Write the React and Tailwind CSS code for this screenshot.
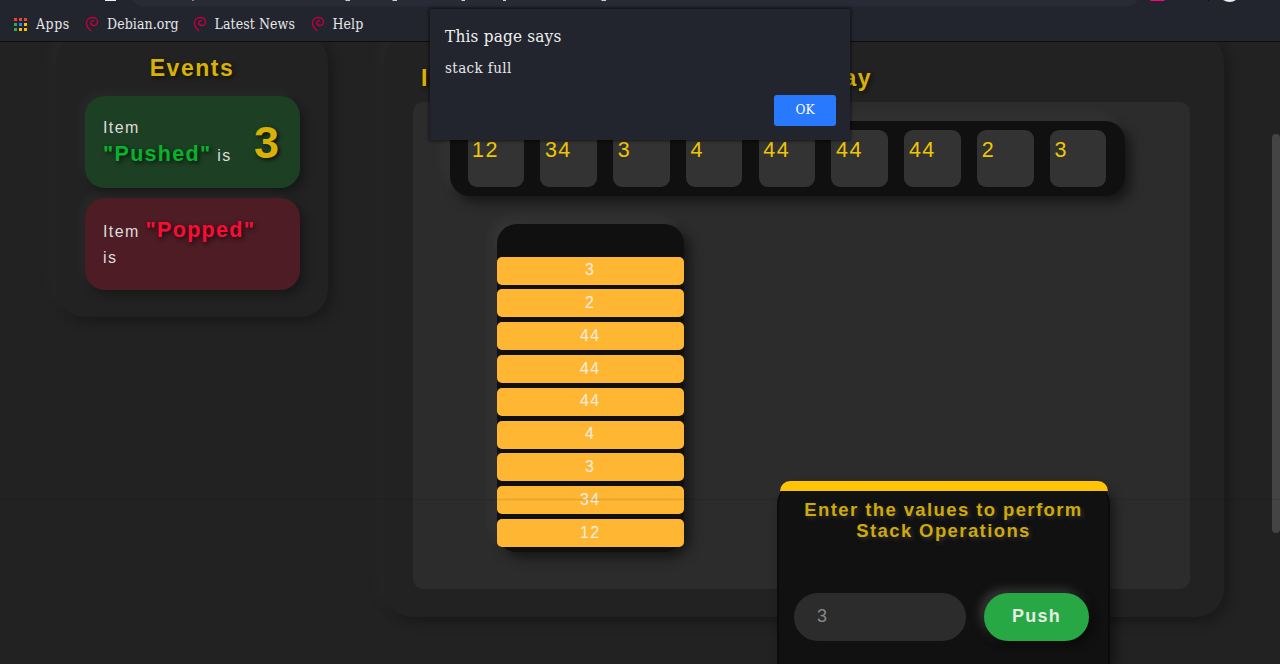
import React from "react";

const slab = "whitespace-nowrap font-['Roboto_Slab','DejaVu_Serif_Condensed','DejaVu_Serif',serif]";
const arrayItems = [12, 34, 3, 4, 44, 44, 44, 2, 3];
const stackItems = [3, 2, 44, 44, 44, 4, 3, 34, 12];

function AppsIcon() {
  const colors = ["#ea4335", "#ea4335", "#ea4335", "#34a853", "#2684fc", "#fbbc04", "#34a853", "#fbbc04", "#fbbc04"];
  return (
    <svg width="13" height="13" viewBox="0 0 13 13" className="shrink-0">
      {colors.map((c, i) => (
        <rect key={i} x={(i % 3) * 5} y={Math.floor(i / 3) * 5} width="3" height="3" fill={c} />
      ))}
    </svg>
  );
}

function Swirl() {
  return (
    <svg width="14" height="16" viewBox="0 0 14 16" fill="none" stroke="#c0003f" strokeLinecap="round" className="shrink-0">
      <path strokeWidth="1.400" d="M5.800 14.600C3.200 12.600 1.400 9.800 1.500 6.800C1.600 3.600 4.200 1.500 7.300 1.500C10.400 1.500 12.500 3.400 12.500 5.900C12.500 8.300 10.500 9.800 8.500 9.500C6.600 9.200 5.700 7.800 5.900 6.400C6.100 5.100 7.200 4.500 8.300 4.700" />
    </svg>
  );
}

function Bookmark({ label, className }) {
  return (
    <div className={"flex items-center " + className}>
      <Swirl />
      <span className={slab + " ml-[8px] text-[14px] leading-[20px] tracking-[0.080px] text-[#e8e8ea]"}>{label}</span>
    </div>
  );
}

function Browser() {
  return (
    <header className="h-[42px] shrink-0 border-b border-[#0c0d10] bg-[#22252e]">
      <svg width="1280" height="7" viewBox="0 0 1280 7" className="block">
        <path d="M132 0H1138Q1134 6.500 1126 6.500H144Q136 6.500 132 0Z" fill="#282a36" />
        <rect x="105" y="0" width="11" height="1" fill="#eee" />
        <path d="M192 0h2v1h-2z" fill="#888" />
        <path d="M345 0h5v1h-4zM392 0h5v1h-4zM461 0h4v1h-3zM503 0h3v1h-3zM601 0h5v1h-4z" fill="#cfd0d4" />
        <path d="M1150 0h15l-1 1h-13z" fill="#ff0080" />
        <path d="M1208 0h1v1h-1z" fill="#08090c" />
        <path d="M1223 0h13q-6 4-13 0z" fill="#eee" />
      </svg>
      <nav className="flex h-[34px] items-center pl-[14px]">
        <div className="flex w-[71px] items-center gap-[9px]">
          <AppsIcon />
          <span className={slab + " text-[14px] leading-[20px] tracking-[0.500px] text-[#e8e8ea]"}>Apps</span>
        </div>
        <Bookmark label="Debian.org" className="w-[107.500px]" />
        <Bookmark label="Latest News" className="w-[118px]" />
        <Bookmark label="Help" className="w-[60px]" />
      </nav>
    </header>
  );
}

function Dialog() {
  return (
    <div className="absolute left-[430px] top-[9px] z-20 flex h-[131px] w-[420px] flex-col bg-[#22252e] pl-[15px] pt-[15px] shadow-[0_0_3px_1px_rgba(0,0,0,0.55)]">
      <h1 className={slab + " text-[17px] leading-[24px] tracking-[0.200px] text-[#f0f0f1]"}>This page says</h1>
      <p className={slab + " mt-[9px] text-[15px] leading-[22px] tracking-[0.400px] text-[#e8e8ea]"}>stack full</p>
      <button className={slab + " ml-auto mr-[14px] mt-[15.500px] flex h-[31.500px] w-[62px] items-center justify-center rounded-[3px] bg-[#2979ff] pb-[2px] text-[13.500px] text-white"}>OK</button>
    </div>
  );
}

function Events() {
  const card = "flex h-[92px] items-center justify-between rounded-[20px] pl-[18.500px] pr-[19px] shadow-[5px_5px_10px_rgba(0,0,0,0.3),-5px_-5px_10px_rgba(255,255,255,0.03)]";
  return (
    <section className="h-[283px] w-[272px] rounded-[28px] bg-[#222] px-[28.500px] pt-[18px] shadow-[6px_6px_10px_#1b1b1b,-6px_-6px_10px_#272727]">
      <h2 className="mb-[12px] text-center text-[23px] font-bold leading-[33px] tracking-[1.500px] text-[#d9b105] [text-shadow:2px_2px_4px_#111]">Events</h2>
      <div className={card + " -mt-px bg-[#1d4024]"}>
        <p className="w-[140px] text-[16px] leading-[26.500px] tracking-[1.400px] text-[#ddd]">
          Item <b className="text-[21.500px] tracking-[1.300px] text-[#06b32c] [text-shadow:2px_2px_4px_#111]">"Pushed"</b> is
        </p>
        <b className="pr-[1.500px] text-[45px] leading-none text-[#d9b105] [text-shadow:2px_2px_4px_#111]">3</b>
      </div>
      <div className={card + " mt-[10px] bg-[#4d1c24]"}>
        <p className="w-[160px] text-[16px] leading-[26.500px] tracking-[1.400px] text-[#ddd]">
          Item <b className="text-[21.500px] tracking-[1.300px] text-[#ff0a35] [text-shadow:2px_2px_4px_#111]">"Popped"</b> is
        </p>
      </div>
    </section>
  );
}

function Visualizer() {
  return (
    <section className="h-[583px] w-[840px] rounded-[28px] bg-[#222] pl-[28.500px] pt-[27px] shadow-[6px_6px_10px_#1b1b1b,-6px_-6px_10px_#272727]">
      <h2 className="mb-[8px] whitespace-nowrap pl-[8.500px] text-[23px] font-bold leading-[34px] tracking-[1.480px] text-[#d9b105] [text-shadow:2px_2px_4px_#111]">Implementation of Stack using Array</h2>
      <div className="-mt-px h-[487px] w-[777.500px] rounded-[10px] bg-[#2c2c2c] pl-[37.500px] pt-[19px]">
        <div className="flex h-[74.500px] w-[674.500px] gap-[16.300px] rounded-[20px] bg-[#101010] pl-[17.500px] pt-[9px] shadow-[6px_6px_12px_rgba(0,0,0,0.5),-6px_-6px_12px_rgba(255,255,255,0.05)]">
          {arrayItems.map((v, i) => (
            <div key={i} className="h-[56.500px] w-[56.500px] rounded-[9px] bg-[#333] pl-[4.600px] pt-[3.500px] text-[21.500px] leading-[32px] tracking-[1.400px] text-[#efc604]">{v}</div>
          ))}
        </div>
        <div className="ml-[46.500px] mt-[28.500px] flex h-[327.500px] w-[187.500px] flex-col gap-[4.800px] rounded-[20px] bg-[#101010] pt-[32.700px] shadow-[6px_6px_12px_rgba(0,0,0,0.5),-6px_-6px_12px_rgba(255,255,255,0.05)]">
          {stackItems.map((v, i) => (
            <div key={i} className="flex h-[28px] shrink-0 items-center justify-center rounded-[5px] bg-[#ffb733] pb-px text-[16px] tracking-[1.400px] text-[#f3eee2]">{v}</div>
          ))}
        </div>
      </div>
    </section>
  );
}

function Operations() {
  return (
    <section className="absolute left-[777px] top-[481px] z-10 h-[183px] w-[333px]">
      <div className="flex h-full flex-col">
        <div className="z-10 mx-[2.500px] h-[9.500px] shrink-0 rounded-t-[10px] bg-[#ffc404]" />
        <div className="-mt-[7px] flex-1 rounded-t-[20px] border-x-2 border-[#0b0b0b] bg-[#111] px-[15px] pt-[15px] shadow-[5px_5px_12px_rgba(0,0,0,0.45)]">
          <h3 className="whitespace-nowrap text-center text-[18.500px] font-bold leading-[21px] tracking-[1.400px] text-[#cfa90a] [text-shadow:2px_2px_4px_#333]">
            Enter the values to perform<br />Stack Operations
          </h3>
          <div className="mt-[52.500px] flex gap-[18.500px]">
            <div className="flex h-[47.500px] w-[171.500px] items-center rounded-full bg-[#2c2c2c] pb-px pl-[23px] text-[18px] text-[#888]">3</div>
            <button className="h-[47.500px] w-[105px] rounded-full bg-[#28a745] pb-px text-[18px] font-bold tracking-[1.300px] text-[#e4ece4] shadow-[4px_4px_10px_#0a0a0a,-4px_-4px_10px_#393939]">Push</button>
          </div>
        </div>
      </div>
    </section>
  );
}

export default function App() {
  return (
    <div className="relative flex h-[664px] w-[1280px] flex-col overflow-hidden bg-[#222] font-['Liberation_Sans',sans-serif]">
      <Browser />
      <main className="flex min-h-0 flex-1 overflow-hidden">
        <div className="-mt-[8px] flex items-start gap-[56px] pl-[56px]">
          <Events />
          <Visualizer />
        </div>
        <div className="ml-auto mt-[92px] h-[399px] w-[8px] rounded-full bg-[#444]" />
      </main>
      <div className="absolute left-0 top-[498px] h-[3px] w-full bg-gradient-to-b from-transparent via-black/10 to-transparent" />
      <Operations />
      <Dialog />
    </div>
  );
}
